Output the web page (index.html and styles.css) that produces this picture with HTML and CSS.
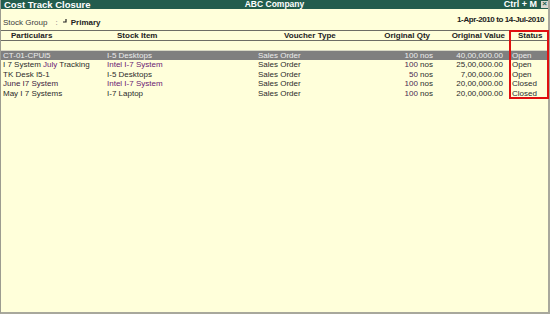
FILE: index.html
```html
<!DOCTYPE html>
<html lang="en">
<head>
    <meta charset="UTF-8">
    <meta name="viewport" content="width=device-width, initial-scale=1.0">
    <title>Cost Track Closure</title>
    <link rel="stylesheet" href="styles.css">
</head>
<body>
    <div class="window">
        <div class="titlebar">
            <span class="title">Cost Track Closure</span>
            <span class="company">ABC Company</span>
            <span class="shortcut">Ctrl + M <span class="close">&times;</span></span>
        </div>

        <div class="info">
            <div class="group">
                <span class="label">Stock Group</span>
                <span class="colon">:</span>
                <svg class="mark" width="4" height="5" viewBox="0 0 4 5"><path d="M3 0 V3 H0" fill="none" stroke="#222" stroke-width="1.2"/></svg>
                <span class="group-name">Primary</span>
            </div>
            <div class="period">1-Apr-2010 to 14-Jul-2010</div>
        </div>

        <div class="report">
            <div class="row head">
                <span class="c-part">Particulars</span>
                <span class="c-item">Stock Item</span>
                <span class="c-type">Voucher Type</span>
                <span class="c-qty">Original Qty</span>
                <span class="c-value">Original Value</span>
                <span class="c-status">Status</span>
            </div>
            <div class="spacer"></div>

            <div class="row selected">
                <span class="c-part">CT-01-CPUi5</span>
                <span class="c-item">I-5 Desktops</span>
                <span class="c-type">Sales Order</span>
                <span class="c-qty">100 nos</span>
                <span class="c-value">40,00,000.00</span>
                <span class="c-status">Open</span>
            </div>
            <div class="row">
                <span class="c-part">I 7 System <span class="hl">July</span> Tracking</span>
                <span class="c-item hl">Intel I-7 System</span>
                <span class="c-type">Sales Order</span>
                <span class="c-qty"><span class="num">100</span> nos</span>
                <span class="c-value">25,00,000.00</span>
                <span class="c-status">Open</span>
            </div>
            <div class="row">
                <span class="c-part">TK Desk I5-1</span>
                <span class="c-item">I-5 Desktops</span>
                <span class="c-type">Sales Order</span>
                <span class="c-qty"><span class="num">50</span> nos</span>
                <span class="c-value">7,00,000.00</span>
                <span class="c-status">Open</span>
            </div>
            <div class="row">
                <span class="c-part dim">June I7 System</span>
                <span class="c-item hl">Intel I-7 System</span>
                <span class="c-type">Sales Order</span>
                <span class="c-qty"><span class="num">100</span> nos</span>
                <span class="c-value">20,00,000.00</span>
                <span class="c-status">Closed</span>
            </div>
            <div class="row">
                <span class="c-part">May I 7 Systems</span>
                <span class="c-item">I-7 Laptop</span>
                <span class="c-type">Sales Order</span>
                <span class="c-qty"><span class="num">100</span> nos</span>
                <span class="c-value">20,00,000.00</span>
                <span class="c-status">Closed</span>
            </div>
        </div>

        <div class="status-box"></div>
    </div>
</body>
</html>
```

FILE: styles.css
```css
body {
    margin: 0;
    font-family: "Liberation Sans", Arial, sans-serif;
    font-size: 8px;
    color: #2b2b2b;
    background-color: #ffffda;
}

.window {
    position: relative;
    box-sizing: border-box;
    width: 550px;
    height: 314px;
    background-color: #ffffda;
    border-left: 1px solid #9c9c90;
    border-right: 2px solid #a8a89c;
    border-bottom: 2px solid #a8a89c;
}

.titlebar {
    display: grid;
    grid-template-columns: 1fr auto 1fr;
    align-items: center;
    height: 9px;
    line-height: 9px;
    overflow: hidden;
    background-color: #235d4d;
    color: #fff;
    font-weight: bold;
    padding: 0 0 0 3px;
}

.title {
    font-size: 9.5px;
}

.company {
    margin-left: -3px;
    font-size: 8.5px;
}

.shortcut {
    justify-self: end;
    display: flex;
    align-items: center;
    gap: 4px;
    font-size: 9px;
}

.close {
    display: inline-block;
    width: 7px;
    height: 7px;
    line-height: 6px;
    text-align: center;
    background-color: #d8d8d0;
    color: #235d4d;
    font-size: 8px;
    font-weight: bold;
}

.info {
    display: flex;
    justify-content: space-between;
    height: 21px;
    box-sizing: border-box;
    padding: 6px 4px 0 2px;
    line-height: 10px;
}

.group {
    display: flex;
    align-items: center;
    padding-top: 1px;
}

.label {
    color: #3a3a3a;
}

.colon {
    margin-left: 8px;
    color: #777;
}

.mark {
    margin: -3px 0 0 5px;
}

.group-name {
    margin-left: 4px;
    font-weight: bold;
    color: #222;
}

.period {
    font-weight: bold;
    color: #222;
    letter-spacing: -0.4px;
}

.row {
    display: grid;
    grid-template-columns: 104px 151px 120px 55px 70px 45px;
    padding-left: 2px;
    height: 9.5px;
    line-height: 9.5px;
    white-space: nowrap;
}

.row .c-qty,
.row .c-value {
    text-align: right;
}

.row .c-status {
    padding-left: 9px;
}

.row.head {
    height: 11px;
    line-height: 9px;
    box-sizing: border-box;
    border-top: 1px solid #6e6e66;
    border-bottom: 1px solid #6e6e66;
    font-weight: bold;
    color: #222;
}

.head .c-part {
    padding-left: 8px;
}

.head .c-item {
    padding-left: 10px;
}

.head .c-type {
    padding-left: 26px;
}

.head .c-qty {
    padding-right: 3px;
}

.head .c-value {
    margin-right: -2px;
}

.head .c-status {
    padding-left: 15px;
}

.spacer {
    height: 9.5px;
    box-sizing: border-box;
    border-bottom: 1px solid #d8d8c4;
}

.row.selected {
    background-color: #7f7f7f;
    color: #ececec;
}

.hl {
    color: #6a2072;
}

.dim {
    color: #3e1c3e;
}

.num {
    color: #4a1f52;
}

.status-box {
    position: absolute;
    left: 508px;
    top: 30px;
    width: 40px;
    height: 69px;
    box-sizing: border-box;
    border: 2px solid #e01010;
}
```
